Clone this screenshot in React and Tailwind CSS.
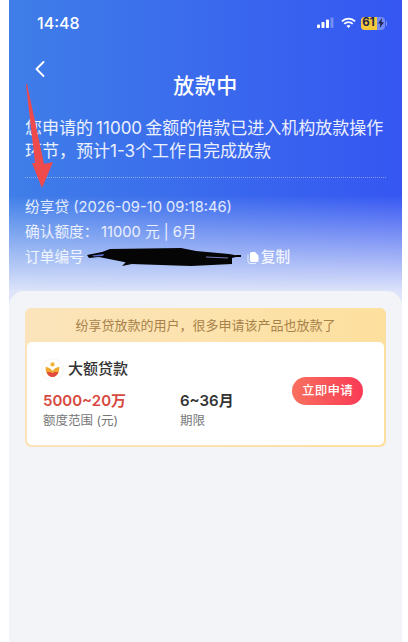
import { ChevronLeft } from 'lucide-react';

const font = { fontFamily: 'Inter, "Noto Sans CJK SC", sans-serif' };

function StatusIcons() {
  return (
    <div className="flex items-center">
      <svg width="17" height="12" viewBox="0 0 17 12">
        <rect x="0" y="7.5" width="3" height="3.500" rx="0.8" fill="#fff" />
        <rect x="4.500" y="5" width="3" height="6" rx="0.8" fill="#fff" />
        <rect x="9" y="2.500" width="3" height="8.500" rx="0.8" fill="#fff" />
        <rect x="13.500" y="0.500" width="3" height="10.500" rx="0.8" fill="#fff" fillOpacity="0.3" />
      </svg>
      <svg width="15" height="12" viewBox="0 0 17 12" fill="none" stroke="#fff" strokeWidth="2" className="ml-[7px]">
        <path d="M1 4.200a10.500 10.500 0 0 1 15 0" />
        <path d="M3.700 7a6.600 6.600 0 0 1 9.600 0" />
        <path d="M8.500 11.600 6.200 9.400a3.200 3.200 0 0 1 4.600 0z" fill="#fff" stroke="none" />
      </svg>
      <div className="ml-[5px] flex items-center">
        <div className="flex h-[13px] w-[24px] items-center overflow-hidden rounded-[4px] bg-white/30">
          <div className="flex h-full w-[16px] items-center justify-center bg-[#f5c93a] text-[11.5px] font-bold leading-none text-[#23264a]">
            61
          </div>
          <svg width="8" height="10" viewBox="0 0 8 10" className="shrink-0">
            <path d="M5 0 1 5.600h2.400L2.600 10 7 4.200H4.400z" fill="#1d2250" />
          </svg>
        </div>
        <div className="ml-px h-[5px] w-[1.5px] rounded-r bg-white/40" />
      </div>
    </div>
  );
}

function Logo() {
  return (
    <div className="flex h-[21px] w-[21px] items-center justify-center rounded-full bg-white shadow-[0_0_2px_rgba(0,0,0,0.12)]">
      <svg width="17" height="17" viewBox="0 0 16 16">
        <circle cx="8" cy="3.200" r="2" fill="#f3b23b" />
        <path d="M1.500 5.500C3.500 6 6.500 7 8 9.500 9.500 7 12.500 6 14.500 5.500 14.800 11 12 15 8 15S1.200 11 1.500 5.500z" fill="#f0a92e" />
        <path d="M2.500 10.500C5 10 7 10.500 8 11.500c1-1 3-1.500 5.500-1C12.500 13.500 10.500 15 8 15s-4.500-1.500-5.500-4.500z" fill="#e2493f" />
      </svg>
    </div>
  );
}

export default function App() {
  return (
    <div className="flex h-[642px] w-full overflow-hidden bg-white pl-[9px]" style={font}>
      <div className="relative flex h-full w-[393px] flex-col overflow-hidden bg-[linear-gradient(180deg,rgba(255,255,255,0)_0px,rgba(255,255,255,0)_195px,rgba(222,228,250,1)_292px),linear-gradient(90deg,#3f7ee8,#3556f2)]">
        <div className="flex items-center justify-between pl-[28px] pr-[15px] pt-[13px]">
          <span className="text-[16px] font-medium leading-[20px] text-white">14:48</span>
          <StatusIcons />
        </div>

        <div className="pl-[19px] pt-[22px] text-white">
          <ChevronLeft size={28} strokeWidth={1.6} className="-ml-[2px]" />
        </div>

        <h1 className="-mt-[12px] text-center text-[21px] font-medium leading-[30px] tracking-[0.5px] text-white">
          放款中
        </h1>

        <div className="px-[16px] pt-[16px]">
          <p className="text-[17px] leading-[23px] text-white/90">
            {'您申请的\u200911000\u2009金额的借款已进入机构放款操作环节，预计1-3个工作日完成放款'}
          </p>
          <div className="mt-[14px] border-t border-dotted border-white/40" />

          <div className="mt-[17px] flex flex-col text-[14.7px] leading-[25px] text-white/85">
            <div>纷享贷 (2026-09-10 09:18:46)</div>
            <div>{'确认额度：\u200911000 元 | 6月'}</div>
            <div className="flex items-center">
              <span>订单编号</span>
              <svg width="156" height="20" viewBox="0 0 156 20" className="ml-[2px] shrink-0">
                <path d="M1 7 16 4 24 1 95 0 110 3 143 6 154 8 146 10 146 16 105 18 45 16 38 14 13 9 3 10z" fill="#050505" />
                <path d="M6 7.500 18 6 17 8 8 8.500z" fill="#5a6fd0" />
                <path d="M36 18 40 14 46 16z" fill="#050505" />
                <path d="M120 9 142 10" stroke="#8d9adf" strokeWidth="0.8" />
                <path d="M150 8h5" stroke="#050505" strokeWidth="2" />
              </svg>
              <span className="ml-[4px] flex items-center gap-[1px] font-medium">
                <svg width="14" height="14" viewBox="0 0 14 14">
                  <path d="M2 3.500v7a2 2 0 0 0 2 2h6" fill="none" stroke="#fff" strokeOpacity="0.7" strokeWidth="1" />
                  <path d="M4 2.500a1.500 1.500 0 0 1 1.500-1.500h3.500l3.500 3.500v5a1.500 1.500 0 0 1-1.500 1.500h-5.500a1.500 1.500 0 0 1-1.500-1.500z" fill="#fff" />
                </svg>
                复制
              </span>
            </div>
          </div>
        </div>

        <div className="mt-[21px] flex-1 rounded-t-[15px] bg-[#f2f4f7] px-[16px] pt-[17px]">
          <div className="rounded-[6px] bg-[linear-gradient(90deg,#fbe4bb,#fde09e)] px-[2px] pb-[2px]">
            <div className="text-center text-[13px] leading-[34px] text-[#a8824a]">
              纷享贷放款的用户，很多申请该产品也放款了
            </div>
            <div className="flex items-center justify-between rounded-[5px] bg-white pb-[15px] pl-[15px] pr-[21px] pt-[15px]">
              <div className="flex flex-col">
                <div className="flex items-center gap-[5px]">
                  <Logo />
                  <span className="text-[15px] font-medium leading-[24px] text-[#333]">大额贷款</span>
                </div>
                <div className="mt-[10px] flex pl-px">
                  <div className="w-[137px]">
                    <div className="text-[15px] font-semibold leading-[20px] text-[#d8493f]">5000~20万</div>
                    <div className="mt-[1px] text-[12.5px] leading-[18px] text-[#777]">额度范围 (元)</div>
                  </div>
                  <div>
                    <div className="text-[15px] font-semibold leading-[20px] text-[#333]">6~36月</div>
                    <div className="mt-[1px] text-[12.5px] leading-[18px] text-[#777]">期限</div>
                  </div>
                </div>
              </div>
              <button className="mb-[5px] h-[28px] w-[71px] rounded-full bg-[linear-gradient(90deg,#f8705e,#fa3a55)] text-[12.5px] font-medium tracking-[0.3px] text-white">
                立即申请
              </button>
            </div>
          </div>
        </div>

        <svg width="40" height="120" viewBox="0 0 40 120" className="absolute left-[10px] top-[80px]">
          <path d="M7 4 16 83 13 83 23 108 34 82 25 84 8 4z" fill="#ef4a4c" />
        </svg>
      </div>
    </div>
  );
}
